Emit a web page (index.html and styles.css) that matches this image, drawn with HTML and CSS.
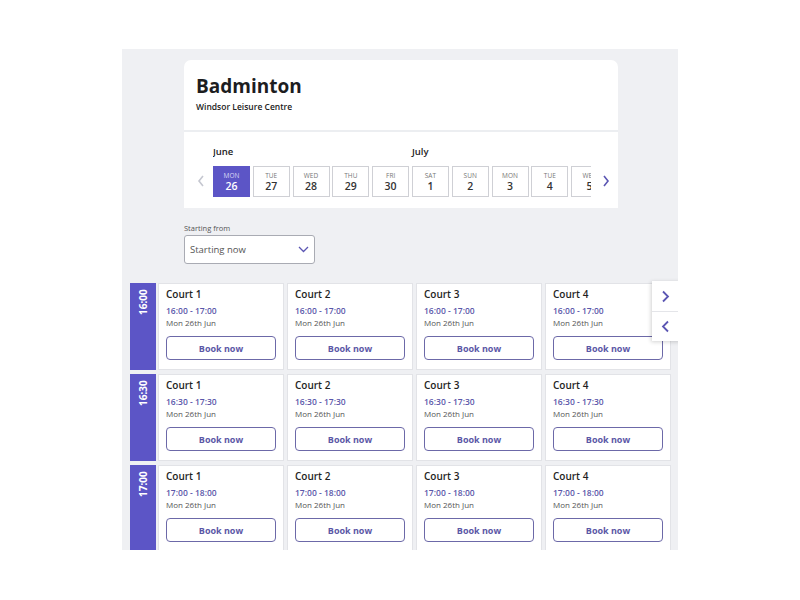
FILE: index.html
```html
<!DOCTYPE html>
<html lang="en">
<head>
<meta charset="utf-8">
<title>Badminton - Windsor Leisure Centre</title>
<link rel="stylesheet" href="styles.css">
</head>
<body>
<div class="panel">
  <section class="head-card">
    <div class="head-top">
      <h1 class="title">Badminton</h1>
      <p class="venue">Windsor Leisure Centre</p>
    </div>
    <div class="dates">
      <button class="nav nav-prev" aria-label="Previous">
        <svg width="8" height="12" viewBox="0 0 8 12"><path d="M6 1 L2 6 L6 11" fill="none" stroke="#c5c7d0" stroke-width="1.6"/></svg>
      </button>
      <div class="strip">
        <div class="day"><span class="month">June</span><div class="cell selected"><span class="wd">MON</span><span class="num">26</span></div></div>
        <div class="day"><span class="month"></span><div class="cell"><span class="wd">TUE</span><span class="num">27</span></div></div>
        <div class="day"><span class="month"></span><div class="cell"><span class="wd">WED</span><span class="num">28</span></div></div>
        <div class="day"><span class="month"></span><div class="cell"><span class="wd">THU</span><span class="num">29</span></div></div>
        <div class="day"><span class="month"></span><div class="cell"><span class="wd">FRI</span><span class="num">30</span></div></div>
        <div class="day"><span class="month">July</span><div class="cell"><span class="wd">SAT</span><span class="num">1</span></div></div>
        <div class="day"><span class="month"></span><div class="cell"><span class="wd">SUN</span><span class="num">2</span></div></div>
        <div class="day"><span class="month"></span><div class="cell"><span class="wd">MON</span><span class="num">3</span></div></div>
        <div class="day"><span class="month"></span><div class="cell"><span class="wd">TUE</span><span class="num">4</span></div></div>
        <div class="day"><span class="month"></span><div class="cell"><span class="wd">WED</span><span class="num">5</span></div></div>
      </div>
      <button class="nav nav-next" aria-label="Next">
        <svg width="8" height="12" viewBox="0 0 8 12"><path d="M2 1 L6 6 L2 11" fill="none" stroke="#5b56b3" stroke-width="1.6"/></svg>
      </button>
    </div>
  </section>

  <div class="filter">
    <label class="filter-label">Starting from</label>
    <div class="select">
      <span>Starting now</span>
      <svg width="11" height="7" viewBox="0 0 11 7"><path d="M1 1 L5.5 5.5 L10 1" fill="none" stroke="#5b56b3" stroke-width="1.3"/></svg>
    </div>
  </div>

  <div class="grid-wrap">
    <div class="slots">
      <div class="row">
        <div class="time"><span>16:00</span></div>
        <div class="card"><h3>Court 1</h3><p class="t">16:00 - 17:00</p><p class="d">Mon 26th Jun</p><button class="book">Book now</button></div>
        <div class="card"><h3>Court 2</h3><p class="t">16:00 - 17:00</p><p class="d">Mon 26th Jun</p><button class="book">Book now</button></div>
        <div class="card"><h3>Court 3</h3><p class="t">16:00 - 17:00</p><p class="d">Mon 26th Jun</p><button class="book">Book now</button></div>
        <div class="card"><h3>Court 4</h3><p class="t">16:00 - 17:00</p><p class="d">Mon 26th Jun</p><button class="book">Book now</button></div>
      </div>
      <div class="row">
        <div class="time"><span>16:30</span></div>
        <div class="card"><h3>Court 1</h3><p class="t">16:30 - 17:30</p><p class="d">Mon 26th Jun</p><button class="book">Book now</button></div>
        <div class="card"><h3>Court 2</h3><p class="t">16:30 - 17:30</p><p class="d">Mon 26th Jun</p><button class="book">Book now</button></div>
        <div class="card"><h3>Court 3</h3><p class="t">16:30 - 17:30</p><p class="d">Mon 26th Jun</p><button class="book">Book now</button></div>
        <div class="card"><h3>Court 4</h3><p class="t">16:30 - 17:30</p><p class="d">Mon 26th Jun</p><button class="book">Book now</button></div>
      </div>
      <div class="row">
        <div class="time"><span>17:00</span></div>
        <div class="card"><h3>Court 1</h3><p class="t">17:00 - 18:00</p><p class="d">Mon 26th Jun</p><button class="book">Book now</button></div>
        <div class="card"><h3>Court 2</h3><p class="t">17:00 - 18:00</p><p class="d">Mon 26th Jun</p><button class="book">Book now</button></div>
        <div class="card"><h3>Court 3</h3><p class="t">17:00 - 18:00</p><p class="d">Mon 26th Jun</p><button class="book">Book now</button></div>
        <div class="card"><h3>Court 4</h3><p class="t">17:00 - 18:00</p><p class="d">Mon 26th Jun</p><button class="book">Book now</button></div>
      </div>
    </div>
    <div class="pager">
      <button class="pg" aria-label="Next courts">
        <svg width="9" height="13" viewBox="0 0 9 13"><path d="M2 1.5 L7 6.5 L2 11.5" fill="none" stroke="#5b56b3" stroke-width="1.8"/></svg>
      </button>
      <button class="pg" aria-label="Previous courts">
        <svg width="9" height="13" viewBox="0 0 9 13"><path d="M7 1.5 L2 6.5 L7 11.5" fill="none" stroke="#5b56b3" stroke-width="1.8"/></svg>
      </button>
    </div>
  </div>
</div>
</body>
</html>
```

FILE: styles.css
```css
* { box-sizing: border-box; }
html, body { margin: 0; padding: 0; background: #ffffff; }
body {
  font-family: "Open Sans", "Noto Sans", sans-serif;
  color: #222;
  padding-top: 49px;
}
button { font-family: inherit; }

.panel {
  width: 556px;
  height: 501px;
  margin-left: 122px;
  background: #eff0f3;
  overflow: hidden;
  padding-top: 11px;
}

.head-card {
  width: 434px;
  margin-left: 62px;
  background: #fff;
  border-radius: 7px 7px 0 0;
}
.head-top {
  height: 72px;
  padding: 13px 12px 0;
  border-bottom: 2px solid #eceef1;
}
.title {
  margin: 0;
  font-size: 19px;
  line-height: 26px;
  font-weight: 700;
  color: #1d1d1f;
}
.venue {
  margin: 2px 0 0;
  font-size: 8.5px;
  line-height: 12px;
  font-weight: 600;
  color: #222;
}

.dates {
  display: flex;
  align-items: flex-start;
  height: 76px;
  padding-top: 13px;
}
.nav {
  border: 0;
  background: none;
  padding: 0;
  height: 30px;
  margin-top: 21px;
  display: flex;
  align-items: center;
  justify-content: center;
  cursor: pointer;
}
.nav-prev { width: 29px; padding-left: 5px; }
.nav-next { width: 27px; padding-left: 2px; }

.strip {
  width: 379px;
  display: flex;
  gap: 2.8px;
  overflow: hidden;
}
.day {
  flex: 0 0 37px;
  display: flex;
  flex-direction: column;
}
.month {
  height: 21px;
  font-size: 9.5px;
  line-height: 14px;
  font-weight: 600;
  color: #222;
  white-space: nowrap;
}
.cell {
  height: 31px;
  border: 1px solid #cfd0d5;
  background: #fff;
  display: flex;
  flex-direction: column;
  align-items: center;
  justify-content: center;
}
.wd {
  font-size: 6.5px;
  line-height: 9px;
  color: #777;
}
.num {
  font-size: 10.5px;
  line-height: 13px;
  font-weight: 600;
  color: #333;
}
.cell.selected {
  background: #5c55c6;
  border-color: #5c55c6;
}
.cell.selected .wd { color: #d9d7f5; }
.cell.selected .num { color: #fff; }

.filter {
  margin-left: 62px;
  margin-top: 15px;
}
.filter-label {
  display: block;
  font-size: 7.5px;
  line-height: 11px;
  color: #555;
  margin-bottom: 1px;
}
.select {
  width: 131px;
  height: 29px;
  border: 1px solid #a9abb3;
  border-radius: 3px;
  background: #fff;
  display: flex;
  align-items: center;
  justify-content: space-between;
  padding: 0 5px 0 5px;
  font-size: 9.5px;
  color: #555;
}

.grid-wrap {
  position: relative;
  margin-top: 19px;
}
.slots {
  display: flex;
  flex-direction: column;
  gap: 4px;
  padding-left: 8px;
}
.row {
  display: flex;
  gap: 3px;
  height: 87px;
}
.time {
  flex: 0 0 26px;
  margin-right: -1px;
  background: #5c55c6;
  display: flex;
  justify-content: center;
  padding-top: 7px;
}
.time span {
  writing-mode: vertical-rl;
  transform: rotate(180deg);
  color: #fff;
  font-size: 10px;
  font-weight: 700;
  line-height: 12px;
  height: 25px;
}
.card {
  flex: 0 0 126px;
  width: 126px;
  min-width: 0;
  background: #fff;
  border: 1px solid #e2e3e7;
  padding: 4px 7px 0 7px;
}
.card h3 {
  margin: 0;
  font-size: 10px;
  line-height: 13px;
  font-weight: 600;
  color: #1f1f1f;
}
.card .t {
  margin: 4px 0 0;
  font-size: 8.5px;
  line-height: 11px;
  font-weight: 600;
  color: #5b57aa;
}
.card .d {
  margin: 1px 0 0;
  font-size: 8px;
  line-height: 11px;
  color: #555;
}
.book {
  display: block;
  width: 110px;
  height: 24px;
  margin-top: 8px;
  background: #fff;
  border: 1.5px solid #6c69a8;
  border-radius: 4px;
  color: #5b57a6;
  font-size: 9px;
  font-weight: 700;
  padding: 0;
}

.pager {
  position: absolute;
  top: -2px;
  left: 530px;
  width: 30px;
  background: #fff;
  box-shadow: -1px 1px 4px rgba(0, 0, 0, 0.18);
  display: flex;
  flex-direction: column;
}
.pg {
  height: 30px;
  border: 0;
  background: #fff;
  display: flex;
  align-items: center;
  justify-content: flex-start;
  padding: 0 0 0 9px;
}
.pg + .pg { border-top: 1px solid #e4e5e9; }
```
